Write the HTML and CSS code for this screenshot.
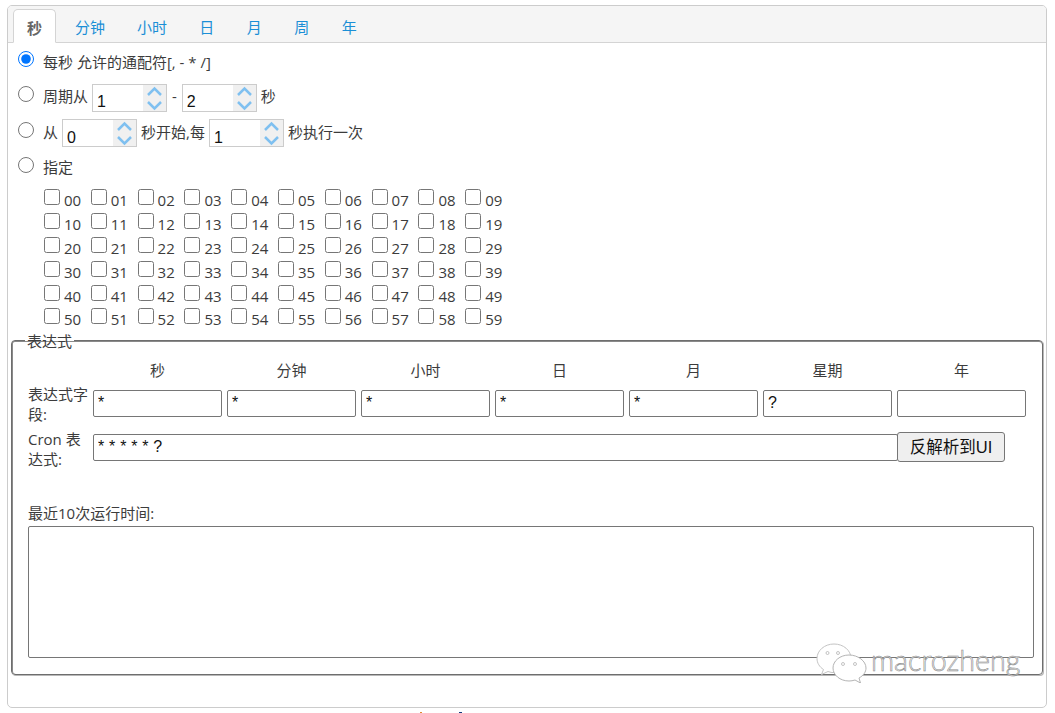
FILE: index.html
```html
<!DOCTYPE html>
<html lang="zh">
<head>
<meta charset="utf-8">
<title>Cron</title>
<link rel="stylesheet" href="styles.css">
</head>
<body>
<svg class="defs" width="0" height="0" aria-hidden="true">
  <symbol id="chev" viewBox="0 0 23 26">
    <path d="M5 10 11.5 3.500 18 10" fill="none" stroke="#7fc0f0" stroke-width="2.500"/>
    <path d="M5 17 11.5 23.500 18 17" fill="none" stroke="#7fc0f0" stroke-width="2.500"/>
  </symbol>
</svg>
<main class="card">
  <nav class="tabs">
    <a class="tab active">秒</a>
    <a class="tab first">分钟</a>
    <a class="tab">小时</a>
    <a class="tab">日</a>
    <a class="tab">月</a>
    <a class="tab">周</a>
    <a class="tab">年</a>
  </nav>
  <section class="pane">
    <div class="row"><input class="radio" type="radio" name="m" checked><span class="t">每秒 允许的通配符[, - * /]</span></div>
    <div class="row"><input class="radio" type="radio" name="m"><span class="t">周期从</span>
      <span class="spin"><input value="1"><span class="btns"><svg width="23" height="26"><use href="#chev"/></svg></span></span>
      <span class="t dash">-</span>
      <span class="spin"><input value="2"><span class="btns"><svg width="23" height="26"><use href="#chev"/></svg></span></span>
      <span class="t">秒</span></div>
    <div class="row"><input class="radio" type="radio" name="m"><span class="t">从</span>
      <span class="spin"><input value="0"><span class="btns"><svg width="23" height="26"><use href="#chev"/></svg></span></span>
      <span class="t">秒开始,每</span>
      <span class="spin"><input value="1"><span class="btns"><svg width="23" height="26"><use href="#chev"/></svg></span></span>
      <span class="t">秒执行一次</span></div>
    <div class="row"><input class="radio" type="radio" name="m"><span class="t tight">指定</span></div>
    <div class="checks" id="checks">
      <label><input type="checkbox">00</label><label><input type="checkbox">01</label><label><input type="checkbox">02</label><label><input type="checkbox">03</label><label><input type="checkbox">04</label><label><input type="checkbox">05</label><label><input type="checkbox">06</label><label><input type="checkbox">07</label><label><input type="checkbox">08</label><label><input type="checkbox">09</label>
      <label><input type="checkbox">10</label><label><input type="checkbox">11</label><label><input type="checkbox">12</label><label><input type="checkbox">13</label><label><input type="checkbox">14</label><label><input type="checkbox">15</label><label><input type="checkbox">16</label><label><input type="checkbox">17</label><label><input type="checkbox">18</label><label><input type="checkbox">19</label>
      <label><input type="checkbox">20</label><label><input type="checkbox">21</label><label><input type="checkbox">22</label><label><input type="checkbox">23</label><label><input type="checkbox">24</label><label><input type="checkbox">25</label><label><input type="checkbox">26</label><label><input type="checkbox">27</label><label><input type="checkbox">28</label><label><input type="checkbox">29</label>
      <label><input type="checkbox">30</label><label><input type="checkbox">31</label><label><input type="checkbox">32</label><label><input type="checkbox">33</label><label><input type="checkbox">34</label><label><input type="checkbox">35</label><label><input type="checkbox">36</label><label><input type="checkbox">37</label><label><input type="checkbox">38</label><label><input type="checkbox">39</label>
      <label><input type="checkbox">40</label><label><input type="checkbox">41</label><label><input type="checkbox">42</label><label><input type="checkbox">43</label><label><input type="checkbox">44</label><label><input type="checkbox">45</label><label><input type="checkbox">46</label><label><input type="checkbox">47</label><label><input type="checkbox">48</label><label><input type="checkbox">49</label>
      <label><input type="checkbox">50</label><label><input type="checkbox">51</label><label><input type="checkbox">52</label><label><input type="checkbox">53</label><label><input type="checkbox">54</label><label><input type="checkbox">55</label><label><input type="checkbox">56</label><label><input type="checkbox">57</label><label><input type="checkbox">58</label><label><input type="checkbox">59</label>
    </div>
    <fieldset class="expr">
      <legend>表达式</legend>
      <div class="grid">
        <span></span><span class="h">秒</span><span class="h">分钟</span><span class="h">小时</span><span class="h">日</span><span class="h">月</span><span class="h">星期</span><span class="h">年</span>
        <span class="lbl">表达式字段:</span>
        <input class="f" value="*"><input class="f" value="*"><input class="f" value="*"><input class="f" value="*"><input class="f" value="*"><input class="f" value="?"><input class="f" value="">
      </div>
      <div class="cron">
        <span class="lbl">Cron 表达式:</span>
        <input class="f wide" value="* * * * * ?">
        <button class="parse" type="button">反解析到UI</button>
      </div>
      <div class="recent">最近10次运行时间:</div>
      <textarea class="runs"></textarea>
    </fieldset>
  </section>
</main>
<div class="mark">
  <svg width="52" height="40" viewBox="0 0 52 40">
    <path d="M18 1C8.500 1 1 7.500 1 15.500 1 20 3.500 24 7.500 26.500L5.500 31.500 12 28.500C14 29.300 16 29.600 18 29.600 27.500 29.600 35 23.200 35 15.300 35 7.500 27.500 1 18 1Z" fill="#fff" stroke="#c4c4c4"/>
    <path d="M33 12C24 12 17 18 17 25 17 32 24 38 33 38 35 38 37 37.700 39 37L44.500 40 43 35C47.500 32.500 50 29 50 25 50 18 42 12 33 12Z" fill="#fff" stroke="#b4b4b4"/>
    <circle cx="11.500" cy="10" r="1.500" fill="#fff" stroke="#aaa" stroke-width=".7"/><circle cx="22" cy="10" r="1.500" fill="#fff" stroke="#aaa" stroke-width=".7"/>
    <circle cx="27" cy="21" r="1.500" fill="#fff" stroke="#aaa" stroke-width=".7"/><circle cx="39" cy="21" r="1.500" fill="#fff" stroke="#aaa" stroke-width=".7"/>
  </svg>
  <span class="mark-text">macrozheng</span>
</div>
<i class="speck a"></i><i class="speck b"></i>
</body>
</html>
```
FILE: styles.css
```css
html, body {
  margin: 0;
  height: 100%;
  overflow: hidden;
  background: #fff;
}
body {
  padding: 5px 8px 0 7px;
  box-sizing: border-box;
  font: 15px "Open Sans", "Noto Sans CJK SC", sans-serif;
  color: #3c3c3c;
}
.defs { position: absolute; }
.card {
  height: 703px;
  box-sizing: border-box;
  border: 1px solid #ccc;
  border-radius: 5px;
}
.tabs {
  height: 37px;
  box-sizing: border-box;
  display: flex;
  align-items: flex-end;
  padding-left: 5px;
  background: #f5f5f5;
  border-bottom: 1px solid #d4d4d4;
  border-radius: 4px 4px 0 0;
}
.tab {
  width: 62px;
  height: 34px;
  box-sizing: border-box;
  display: flex;
  align-items: center;
  justify-content: center;
  color: #1b8fd6;
  line-height: 1;
  padding-top: 4px;
}
.tab:nth-child(n+4) { width: 47.5px; }
.tab.first { margin-left: 3px; }
.tab.active {
  width: 43px;
  margin-bottom: -1px;
  background: #fff;
  border: 1px solid #d4d4d4;
  border-bottom-color: #fff;
  border-radius: 5px 5px 0 0;
  color: #666;
  font-weight: 700;
}
.pane { padding: 0 3px; }
.row {
  height: 35.5px;
  display: flex;
  align-items: center;
  gap: 4px;
  padding-left: 7px;
}
.row:first-child { height: 34.5px; }
.radio {
  width: 16px;
  height: 16px;
  margin: 0 5px 2px 0;
  accent-color: #0075ff;
}
.t { white-space: pre; padding-top: 1px; }
.row:first-child .t { padding-top: 2px; }
.t.tight { padding-top: 0; }
.dash { margin: 0 1px; }
.spin {
  width: 75px;
  height: 28px;
  margin-top: 5px;
  box-sizing: border-box;
  display: flex;
  border: 1px solid #ccc;
  background: #fff;
}
.spin input {
  flex: 1;
  min-width: 0;
  box-sizing: border-box;
  border: 0;
  outline: 0;
  padding: 9px 0 0 4px;
  font: 16px "Liberation Sans", sans-serif;
  color: #111;
  background: transparent;
}
.btns {
  width: 23px;
  background: #f0f0f0;
  display: flex;
  align-items: center;
}
.checks {
  display: grid;
  grid-template-columns: repeat(10, 46.8px);
  grid-auto-rows: 23.8px;
  margin: 5px 0 0 33px;
}
.checks label {
  display: flex;
  align-items: center;
  white-space: pre;
  line-height: 1;
}
.checks input {
  width: 16px;
  height: 16px;
  margin: 0 4px 7px 0;
}
.expr {
  margin: -.5px 0 0 0;
  width: 1032px;
  height: 344px;
  box-sizing: border-box;
  border: 1px solid #6e6e6e;
  border-radius: 4px;
  box-shadow: 1px 1px 0 #b8b8b8, inset 1px 0 0 #8a8a8a, inset 0 1px 0 #8a8a8a;
  padding: 0 8px 0 16px;
}
.expr legend {
  margin-left: -3px;
  padding: 3px 2px 0;
  font-size: 15px;
  line-height: 1;
}
.grid {
  display: grid;
  grid-template-columns: 60px repeat(7, 129px);
  column-gap: 5px;
  align-items: start;
  margin-top: 11.5px;
}
.h {
  text-align: center;
  height: 29px;
  line-height: 18px;
}
.lbl {
  line-height: 20px;
  width: 62px;
  margin-top: -6px;
}
.f {
  height: 27px;
  box-sizing: border-box;
  width: 129px;
  border: 1px solid #767676;
  border-radius: 2px;
  padding: 0 0 0 4px;
  font: 16px "Liberation Sans", sans-serif;
  color: #111;
  outline: 0;
}
.cron {
  display: flex;
  align-items: center;
  margin-top: 9px;
  height: 30px;
}
.cron .lbl { width: 65px; flex: none; margin-top: 2px; }
.wide { width: 805px; flex: none; word-spacing: .4px; padding-bottom: 2px; }
.parse {
  width: 108px;
  height: 30px;
  margin: -2px 0 0 -1px;
  box-sizing: border-box;
  border: 1px solid #767676;
  border-radius: 3px;
  background: #efefef;
  color: #111;
  font: 16.5px "Liberation Sans", "Noto Sans CJK SC", sans-serif;
  padding: 0 0 2px;
}
.recent {
  margin-top: 40px;
  height: 23px;
  line-height: 20px;
}
.runs {
  display: block;
  width: 1006px;
  height: 132px;
  box-sizing: border-box;
  border: 1px solid #767676;
  border-radius: 2px;
  margin: 0;
  padding: 2px;
  resize: none;
  outline: 0;
}
.mark {
  position: absolute;
  left: 816px;
  top: 643px;
  display: flex;
  align-items: center;
  gap: 3px;
}
.mark-text {
  font: 300 28.7px "Lato", "Open Sans", sans-serif;
  color: #fff;
  -webkit-text-stroke: .6px #888;
  margin-top: -6px;
}
.speck {
  position: absolute;
  top: 712px;
  height: 1px;
}
.speck.a { left: 420px; width: 2px; background: #e08a30; }
.speck.b { left: 459px; width: 3px; background: #123a80; }
```
